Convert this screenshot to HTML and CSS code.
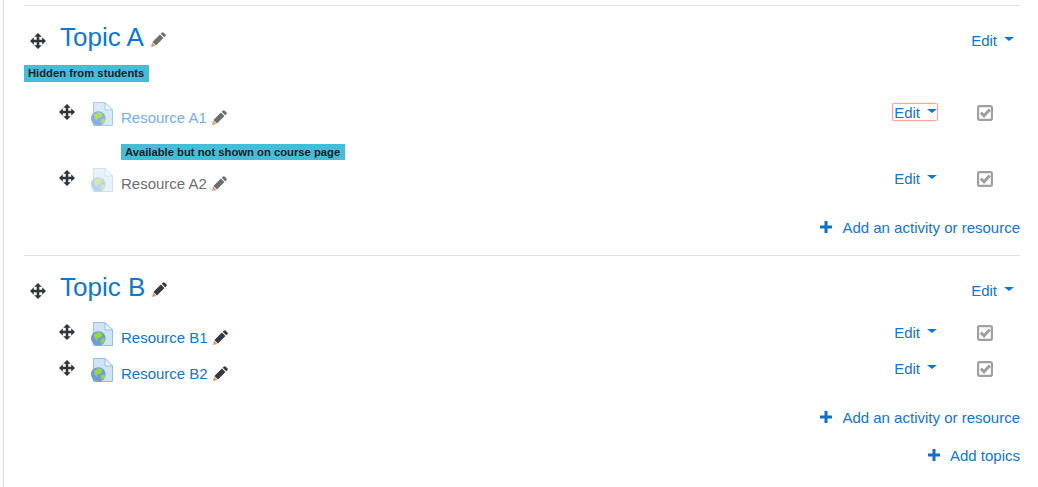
FILE: index.html
```html
<!DOCTYPE html>
<html lang="en">
<head>
    <meta charset="UTF-8">
    <title>Course topics</title>
    <link rel="stylesheet" href="styles.css">
</head>
<body>
    <svg class="defs" width="0" height="0">
        <defs>
            <symbol id="i-move" viewBox="0 0 16 16">
                <path fill="#2f363c" d="M8 0l3.800 3.800H9.300v2.900h2.900V4.200L16 8l-3.800 3.800V9.300H9.300v2.900h2.500L8 16l-3.800-3.800h2.500V9.300H3.800v2.500L0 8l3.800-3.800v2.500h2.900V3.800H4.200z"/>
            </symbol>
            <symbol id="i-pen" viewBox="0 0 16 16">
                <path fill="currentColor" d="M11.500.7a1.500 1.500 0 0 1 2.100 0l1.700 1.700a1.500 1.500 0 0 1 0 2.100l-1.200 1.200-3.800-3.800zM9.500 2.700l3.800 3.800-8 8-3.800-3.800z"/>
                <path fill="#d99a6c" d="M1.200 11.300l3.500 3.500L0 16z"/>
            </symbol>
            <symbol id="i-url" viewBox="0 0 22 24">
                <path fill="#cfe4f7" stroke="#8fbfee" d="M2.500 .5h11.500l7.500 7.500v15.500h-19z"/>
                <path fill="#eef6fc" stroke="#8fbfee" d="M14 .5v7.500h7.500z"/>
                <circle cx="7.300" cy="16.500" r="7.300" fill="#6b9cdc"/>
                <path fill="#9ad640" d="M3 12.500l5-2.500 3.500 2-1.500 3.500-3.500.5-.5 3-2.500-3zM10 17.500l3.500-1.500.5 3-3 3-1.500-2z"/>
            </symbol>
            <symbol id="i-check" viewBox="0 0 16 16">
                <path fill="none" stroke="#a0a0a0" stroke-width="2.200" d="M2.500 1.100h11a1.400 1.400 0 0 1 1.400 1.400v11a1.400 1.400 0 0 1-1.400 1.400h-11a1.400 1.400 0 0 1-1.400-1.400v-11a1.400 1.400 0 0 1 1.400-1.400z"/>
                <path fill="none" stroke="#a0a0a0" stroke-width="3" d="M3.800 7.600l3.200 3.200 5.800-6.400"/>
            </symbol>
            <symbol id="i-plus" viewBox="0 0 12 12">
                <path fill="#1170c4" d="M4.500 0h3v4.500H12v3H7.500V12h-3V7.500H0v-3h4.500z"/>
            </symbol>
        </defs>
    </svg>

    <div class="course">
        <section class="topic topic-a">
            <div class="topic-head">
                <svg class="move"><use href="#i-move"/></svg>
                <h3 class="topic-name"><a href="#">Topic A</a></h3>
                <svg class="pen pen-big pen-dim"><use href="#i-pen"/></svg>
                <a class="edit edit-head" href="#">Edit<span class="caret"></span></a>
            </div>
            <div class="badge badge-topic">Hidden from students</div>

            <div class="row row-a1">
                <svg class="move"><use href="#i-move"/></svg>
                <svg class="res-icon res-icon-hidden"><use href="#i-url"/></svg>
                <a class="res-name res-name-hidden" href="#">Resource A1</a>
                <svg class="pen pen-dim"><use href="#i-pen"/></svg>
                <a class="edit edit-focus" href="#">Edit<span class="caret"></span></a>
                <svg class="check"><use href="#i-check"/></svg>
            </div>

            <div class="badge badge-res">Available but not shown on course page</div>
            <div class="row row-a2">
                <svg class="move"><use href="#i-move"/></svg>
                <svg class="res-icon res-icon-stealth"><use href="#i-url"/></svg>
                <a class="res-name res-name-stealth" href="#">Resource A2</a>
                <svg class="pen pen-dim"><use href="#i-pen"/></svg>
                <a class="edit" href="#">Edit<span class="caret"></span></a>
                <svg class="check"><use href="#i-check"/></svg>
            </div>

            <div class="add-line add-line-a">
                <a class="add" href="#"><svg class="plus"><use href="#i-plus"/></svg>Add an activity or resource</a>
            </div>
        </section>

        <section class="topic topic-b">
            <div class="topic-head">
                <svg class="move"><use href="#i-move"/></svg>
                <h3 class="topic-name"><a href="#">Topic B</a></h3>
                <svg class="pen pen-big"><use href="#i-pen"/></svg>
                <a class="edit edit-head" href="#">Edit<span class="caret"></span></a>
            </div>

            <div class="row row-b1">
                <svg class="move"><use href="#i-move"/></svg>
                <svg class="res-icon"><use href="#i-url"/></svg>
                <a class="res-name" href="#">Resource B1</a>
                <svg class="pen"><use href="#i-pen"/></svg>
                <a class="edit" href="#">Edit<span class="caret"></span></a>
                <svg class="check"><use href="#i-check"/></svg>
            </div>
            <div class="row row-b2">
                <svg class="move"><use href="#i-move"/></svg>
                <svg class="res-icon"><use href="#i-url"/></svg>
                <a class="res-name" href="#">Resource B2</a>
                <svg class="pen"><use href="#i-pen"/></svg>
                <a class="edit" href="#">Edit<span class="caret"></span></a>
                <svg class="check"><use href="#i-check"/></svg>
            </div>

            <div class="add-line add-line-b">
                <a class="add" href="#"><svg class="plus"><use href="#i-plus"/></svg>Add an activity or resource</a>
            </div>
        </section>

        <div class="add-line add-line-topics">
            <a class="add" href="#"><svg class="plus"><use href="#i-plus"/></svg>Add topics</a>
        </div>
    </div>
</body>
</html>
```

FILE: styles.css
```css
html, body {
    height: 100%;
    overflow: hidden;
}
body {
    margin: 0;
    font-family: "Liberation Sans", Arial, sans-serif;
    font-size: 15px;
    color: #373a3c;
    background-color: #fff;
}
a {
    color: #0f76d2;
    text-decoration: none;
}
.defs {
    display: block;
    height: 0;
}
.course {
    box-sizing: border-box;
    height: 487px;
    margin-left: 3px;
    padding: 5px 18px 0 20px;
    border-left: 1px solid #dee2e6;
}
.topic {
    border-top: 1px solid #dee2e6;
}
.topic-a {
    height: 249px;
}
.topic-b {
    height: 169px;
}
.topic-head {
    display: flex;
    align-items: center;
    height: 38px;
    margin-top: 13px;
    padding-left: 6px;
}
.topic-head .move {
    margin-top: 6px;
}
.move {
    flex: none;
    width: 16px;
    height: 16px;
}
.topic-name {
    margin: 0 0 2px 14px;
    font-size: 26px;
    font-weight: 400;
    line-height: 38px;
}
.pen {
    flex: none;
    width: 15px;
    height: 15px;
    margin-left: 5px;
    color: #333a40;
}
.pen-big {
    margin-top: 2px;
    margin-left: 7px;
}
.pen-dim {
    color: #6a6f73;
}
.edit {
    display: inline-flex;
    align-items: center;
    box-sizing: border-box;
    height: 18px;
    padding: 0 0 0 1px;
    margin-left: auto;
    border: 1px solid transparent;
    border-radius: 2px;
}
.edit-focus {
    border-color: #ffa58f;
    box-shadow: 0 0 1px #ffa58f;
}
.edit-head {
    margin-top: 4px;
    margin-right: 5px;
}
.row .edit {
    margin-top: -1px;
}
.caret {
    width: 0;
    height: 0;
    margin-left: 7px;
    border-top: 4px solid #0f76d2;
    border-left: 5px solid transparent;
    border-right: 5px solid transparent;
    transform: translateY(-1px);
}
.badge {
    width: fit-content;
    height: 17px;
    padding: 0 5px 0 4px;
    font-size: 11.25px;
    font-weight: 700;
    line-height: 17px;
    color: #1d2125;
    background-color: #46bdd8;
}
.badge-topic {
    margin-top: 8px;
}
.badge-res {
    height: 16px;
    margin: 14px 0 0 97px;
    line-height: 16px;
}
.row {
    display: flex;
    align-items: flex-start;
    height: 26px;
    padding-left: 35px;
}
.row-a1 {
    margin-top: 22px;
}
.row-a2 {
    margin-top: 10px;
}
.row-b1 {
    margin-top: 17px;
}
.row-b2 {
    margin-top: 10px;
}
.res-icon {
    flex: none;
    width: 22px;
    height: 24px;
    margin: -2px 8px 0 16px;
}
.res-icon-hidden {
    opacity: .8;
}
.res-icon-stealth {
    opacity: .45;
}
.res-name {
    margin-top: 5px;
    line-height: 17px;
}
.res-name-hidden {
    color: #72b0ea;
}
.res-name-stealth {
    color: #6a6f73;
}
.row .pen {
    margin-top: 6px;
}
.check {
    flex: none;
    width: 16px;
    height: 16px;
    margin: 1px 27px 0 39px;
}
.add-line {
    display: flex;
    justify-content: flex-end;
}
.add-line-a {
    margin-top: 23px;
}
.add-line-b {
    margin-top: 23px;
}
.add-line-topics {
    margin-top: 22px;
}
.add {
    display: inline-flex;
    align-items: center;
    line-height: 18px;
}
.plus {
    width: 12px;
    height: 12px;
    margin-right: 10px;
    transform: translateY(-1px);
}
```
